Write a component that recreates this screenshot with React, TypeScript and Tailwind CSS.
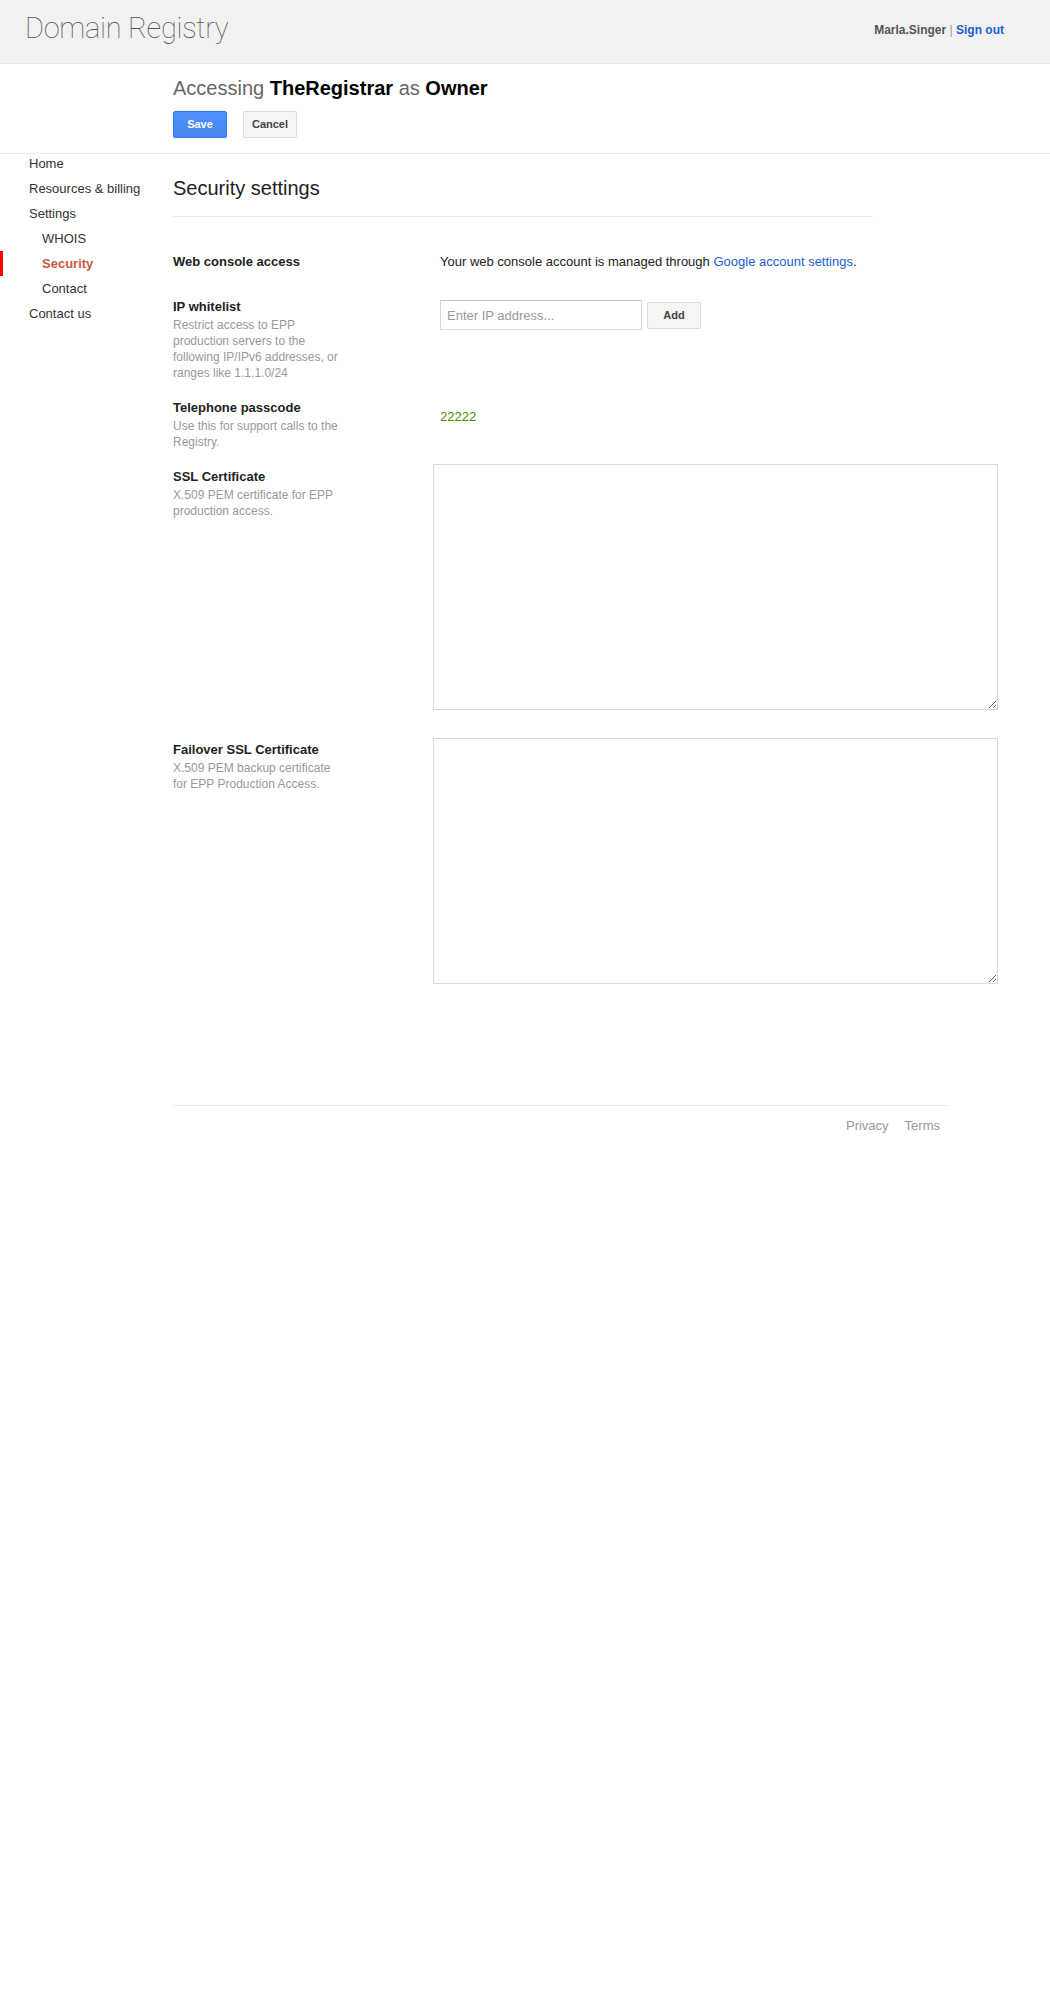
import React from 'react';

const navItems = [
  { label: 'Home', sub: false },
  { label: 'Resources & billing', sub: false },
  { label: 'Settings', sub: false },
  { label: 'WHOIS', sub: true },
  { label: 'Security', sub: true, active: true },
  { label: 'Contact', sub: true },
  { label: 'Contact us', sub: false },
];

const Label = ({ title, desc }: { title: string; desc?: string }) => (
  <div className="w-[172px]">
    <div className="text-[13px] leading-[16px] font-bold text-[#222]">{title}</div>
    {desc && <div className="mt-[2px] text-[12px] leading-[16px] text-[#999]">{desc}</div>}
  </div>
);

export default function App() {
  return (
    <div className="min-h-[2000px] bg-white font-['Liberation_Sans',Arial,sans-serif] text-[#222]">
      <header className="h-[64px] bg-[#f1f1f1] border-b border-[#e5e5e5] flex justify-between">
        <div className="pl-[25px] pt-[11px] font-['Roboto',sans-serif] font-thin text-[29px] leading-[34px] text-[#555] tracking-[-0.3px]">
          Domain Registry
        </div>
        <div className="pr-[46px] pt-[22px] text-[12px] leading-[16px] font-bold text-[#555]">
          Marla.Singer <span className="font-normal text-[#999]">|</span>{' '}
          <a className="text-[#1a5fd6]">Sign out</a>
        </div>
      </header>

      <div className="h-[90px] pl-[173px] pt-[12px] border-b border-[#ebebeb]">
        <div className="text-[20px] leading-[24px] text-[#666]">
          Accessing <span className="font-bold text-black">TheRegistrar</span> as{' '}
          <span className="font-bold text-black">Owner</span>
        </div>
        <div className="mt-[11px] flex gap-[16px]">
          <button className="w-[54px] h-[27px] rounded-[2px] border border-[#3079ed] bg-gradient-to-b from-[#4d90fe] to-[#4787ed] text-white text-[11px] font-bold">
            Save
          </button>
          <button className="w-[54px] h-[27px] rounded-[2px] border border-[#dcdcdc] bg-[#f5f5f5] text-[#444] text-[11px] font-bold">
            Cancel
          </button>
        </div>
      </div>

      <div className="flex">
        <nav className="w-[173px] shrink-0 -mt-[3px]">
          {navItems.map((item) => (
            <div
              key={item.label}
              className={
                'h-[25px] leading-[25px] text-[13px] ' +
                (item.active
                  ? 'border-l-[3px] border-[#ff0000] pl-[39px] font-bold text-[#cc5841]'
                  : item.sub
                    ? 'pl-[42px] text-[#333]'
                    : 'pl-[29px] text-[#333]')
              }
            >
              {item.label}
            </div>
          ))}
        </nav>

        <main className="w-[776px] shrink-0">
          <h1 className="mt-[22px] text-[20px] leading-[24px] text-[#222]">Security settings</h1>
          <div className="mt-[16px] h-px w-[700px] bg-[#ebebeb]" />

          <div className="mt-[37px] flex">
            <div className="w-[267px] shrink-0">
              <Label title="Web console access" />
            </div>
            <div className="text-[13px] leading-[16px] text-[#222] whitespace-nowrap">
              Your web console account is managed through{' '}
              <a className="text-[#1a5fd6]">Google account settings</a>.
            </div>
          </div>

          <div className="mt-[29px] flex">
            <div className="w-[267px] shrink-0">
              <Label
                title="IP whitelist"
                desc="Restrict access to EPP production servers to the following IP/IPv6 addresses, or ranges like 1.1.1.0/24"
              />
            </div>
            <div className="mt-[1px] flex items-start gap-[5px]">
              <input
                placeholder="Enter IP address..."
                className="w-[202px] h-[30px] px-[6px] border border-[#d9d9d9] border-t-[#c0c0c0] text-[13px] placeholder:text-[#999] outline-none"
              />
              <button className="mt-[2px] w-[54px] h-[27px] rounded-[2px] border border-[#dcdcdc] bg-[#f5f5f5] text-[#444] text-[11px] font-bold">
                Add
              </button>
            </div>
          </div>

          <div className="mt-[19px] flex">
            <div className="w-[267px] shrink-0">
              <Label title="Telephone passcode" desc="Use this for support calls to the Registry." />
            </div>
            <div className="mt-[9px] text-[13px] leading-[16px] font-normal text-[#3c9200]">22222</div>
          </div>

          <div className="mt-[14px] flex">
            <div className="w-[260px] shrink-0 pt-[5px]">
              <Label title="SSL Certificate" desc="X.509 PEM certificate for EPP production access." />
            </div>
            <textarea className="shrink-0 w-[565px] h-[246px] border border-[#d9d9d9] outline-none block" />
          </div>

          <div className="mt-[28px] flex">
            <div className="w-[260px] shrink-0 pt-[4px]">
              <Label
                title="Failover SSL Certificate"
                desc="X.509 PEM backup certificate for EPP Production Access."
              />
            </div>
            <textarea className="shrink-0 w-[565px] h-[246px] border border-[#d9d9d9] outline-none block" />
          </div>

          <footer className="mt-[121px] border-t border-[#ebebeb] pt-[12px] pr-[9px] flex justify-end gap-[16px] text-[13px] leading-[16px] text-[#999]">
            <a>Privacy</a>
            <a>Terms</a>
          </footer>
        </main>
      </div>
    </div>
  );
}
